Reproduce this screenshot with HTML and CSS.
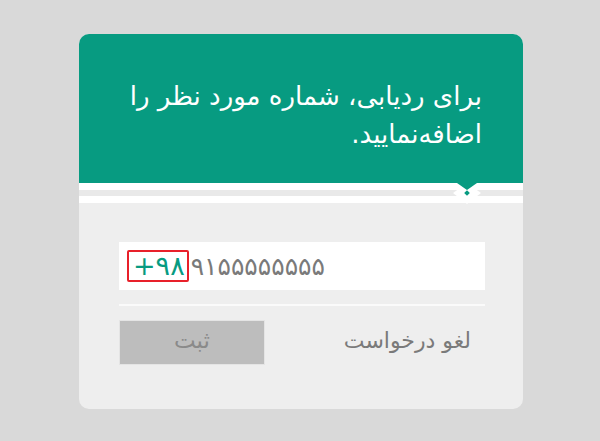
FILE: index.html
```html
<!DOCTYPE html>
<html lang="fa">
<head>
<meta charset="utf-8">
<link rel="stylesheet" href="styles.css">
</head>
<body>
<div class="card">
  <div class="header">
    <p class="title" dir="rtl">برای ردیابی، شماره مورد نظر را<br>اضافه‌نمایید.</p>
  </div>
  <div class="stripes">
    <svg class="notch" width="30" height="21" viewBox="0 0 30 21">
      <polygon points="15,0 29,10 15,21 1,10" fill="#ffffff"/>
      <polygon points="5,0 25,0 15,7" fill="#079b81"/>
      <rect x="13" y="8" width="4" height="4" fill="#079b81" transform="rotate(45 15 10)"/>
    </svg>
  </div>
  <div class="body">
    <div class="field">
      <span class="code">+۹۸</span><span class="number">۹۱۵۵۵۵۵۵۵۵</span>
    </div>
    <div class="rule"></div>
    <div class="actions">
      <button class="submit">ثبت</button>
      <button class="cancel">لغو درخواست</button>
    </div>
  </div>
</div>
</body>
</html>
```

FILE: styles.css
```css
html, body {
  margin: 0;
  padding: 0;
}
body {
  background: #d9d9d9;
  width: 600px;
  height: 441px;
  overflow: hidden;
  font-family: "DejaVu Sans", "Noto Sans", sans-serif;
  padding-top: 34px;
  box-sizing: border-box;
}
.card {
  margin-left: 79px;
  width: 444px;
  height: 375px;
  background: #eeeeee;
  border-radius: 10px;
  overflow: hidden;
  display: flex;
  flex-direction: column;
}
.header {
  background: #079b81;
  height: 149px;
  box-sizing: border-box;
  padding: 43px 41px 0 0;
}
.title {
  margin: 0;
  color: #ffffff;
  font-size: 26px;
  line-height: 38px;
  text-align: right;
}
.stripes {
  position: relative;
  height: 20px;
  background: linear-gradient(to bottom, #ffffff 0, #ffffff 7px, #e9e9e9 7px, #e9e9e9 13px, #ffffff 13px, #ffffff 20px);
}
.notch {
  position: absolute;
  left: 373px;
  top: 0;
  display: block;
}
.body {
  padding: 39px 38px 0 40px;
}
.field {
  background: #ffffff;
  height: 48px;
  display: flex;
  align-items: center;
  padding-left: 8px;
  direction: ltr;
}
.code {
  border: 2px solid #e8202a;
  border-radius: 2px;
  color: #079b81;
  font-size: 27px;
  line-height: 28px;
  height: 28px;
  padding: 0 2px 0 4px;
  margin-right: 2px;
}
.number {
  color: #7a7a7a;
  font-size: 25px;
}
.rule {
  height: 2px;
  background: #fafafa;
  margin-top: 14px;
}
.actions {
  margin-top: 14px;
  display: flex;
  align-items: center;
  justify-content: space-between;
}
.submit {
  width: 146px;
  height: 45px;
  background: #bdbdbd;
  border: 1px solid #e4e4e4;
  color: #8a8a8a;
  font-family: "DejaVu Sans", sans-serif;
  font-size: 23px;
  padding: 0 0 6px 0;
}
.cancel {
  background: none;
  border: none;
  color: #7a7a7a;
  font-family: "DejaVu Sans", sans-serif;
  font-size: 22px;
  padding: 0 14px 4px 0;
}
```
